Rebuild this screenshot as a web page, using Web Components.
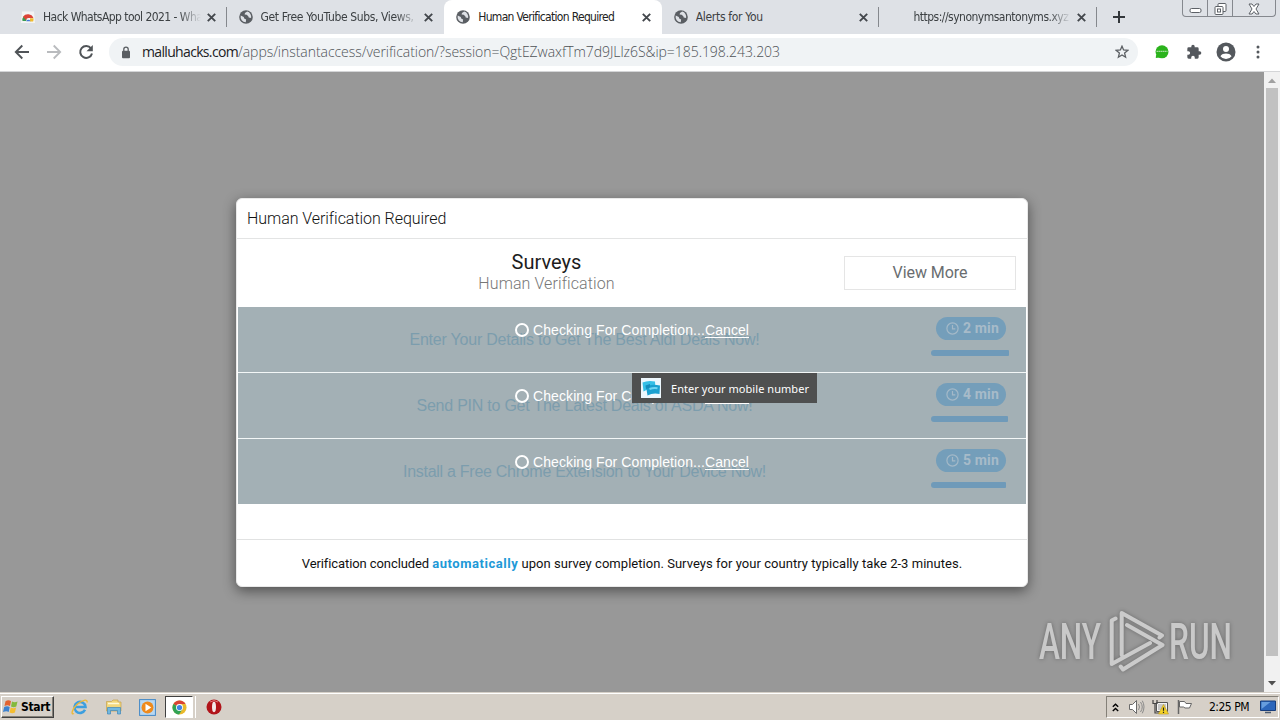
<!DOCTYPE html>
<html lang="en">
<head>
<meta charset="utf-8">
<title>Human Verification Required</title>
<style>
  html, body { margin: 0; height: 100%; overflow: hidden; }
  body { font-family: "Liberation Sans", sans-serif; }
</style>
</head>
<body>
<desktop-screen></desktop-screen>

<script>
const TAHOMA = `"DejaVu Sans Condensed", "Noto Sans", sans-serif`;

const ICONS = {
  globe: `<svg width="14" height="14" viewBox="0 0 14 14"><circle cx="7" cy="7" r="6.8" fill="#5a5e63"/><path d="M1.7 5.6 4.8 7l.4 1.6 1.9.8-.3 2.9A5.5 5.5 0 0 1 1.7 5.6zM8.2 1.6 6 3.1 5.6 4.6l2.1.1 1.6 1.5.4 1.4 2.4.3A5.4 5.4 0 0 0 8.2 1.6z" fill="#dee1e6"/></svg>`,
  store: `<svg width="14" height="14" viewBox="0 0 14 14"><path d="M1 1.5h12L14 13H0z" fill="#f3f3f3"/><path d="M1.5 11a5.5 5.5 0 0 1 1-4.4L5.600 9a2.500 2.500 0 0 0-.3 2z" fill="#3a9b52"/><path d="M2 6.800A6 6 0 0 1 12.400 8H7.500A2.600 2.600 0 0 0 5 10z" fill="#dc4337"/><path d="M9 8.200h3.500a6 6 0 0 1-.4 3.200H9z" fill="#f1bc2e"/><path d="M5.200 11.300a2.300 2.300 0 0 1 4.300 0z" fill="#4177d8"/></svg>`,
  blank: `<svg width="14" height="14"></svg>`,
  close: `<svg width="9" height="9" viewBox="0 0 9 9" stroke="#43474c" stroke-width="1.9"><path d="M.8.8l7.400 7.400M8.200.8.8 8.200"/></svg>`,
  back: `<svg width="16" height="16" viewBox="0 0 16 16" fill="none" stroke="#505458" stroke-width="1.900"><path d="M15 8H2M8.300 1.500 1.800 8l6.500 6.500"/></svg>`,
  forward: `<svg width="16" height="16" viewBox="0 0 16 16" fill="none" stroke="#b9bbbe" stroke-width="1.800"><path d="M1 8h13M7.700 1.500 14.200 8l-6.500 6.500"/></svg>`,
  reload: `<svg width="16" height="16" viewBox="0 0 16 16"><path d="M13 4.300A6 6 0 1 0 14 9.500" fill="none" stroke="#505458" stroke-width="2"/><path d="M14.800 1v6.300H8.500z" fill="#505458"/></svg>`,
  lock: `<svg width="10" height="13" viewBox="0 0 10 13"><rect x="1" y="4.800" width="8" height="7.400" rx="1" fill="#5a5e62"/><path d="M2.800 5V3.300a2.200 2.200 0 0 1 4.400 0V5" fill="none" stroke="#5a5e62" stroke-width="1.300"/></svg>`,
  star: `<svg width="14" height="14" viewBox="0 0 14 14"><path d="M7 1.200 8.600 5l4.200.4-3.200 2.700 1 4.100L7 10l-3.600 2.200 1-4.100L1.200 5.400 5.400 5z" fill="none" stroke="#5a5e62" stroke-width="1.300"/></svg>`,
  green: `<svg width="14" height="14" viewBox="0 0 14 14"><circle cx="7" cy="6.800" r="6.500" fill="#2bb31c"/><path d="M1 9.500.8 13l4-.6z" fill="#2bb31c"/><path d="M1.500 6.300h11" stroke="#a5dc9f" stroke-width="1.300" stroke-dasharray="1.600 .4"/></svg>`,
  puzzle: `<svg width="16" height="16" viewBox="0 0 24 24"><path d="M20.500 11H19V7a2 2 0 0 0-2-2h-4V3.500a2.500 2.500 0 0 0-5 0V5H4a2 2 0 0 0-2 2v3.800h1.500a2.700 2.700 0 0 1 0 5.400H2V20a2 2 0 0 0 2 2h3.800v-1.500a2.700 2.700 0 0 1 5.400 0V22H17a2 2 0 0 0 2-2v-4h1.500a2.500 2.500 0 0 0 0-5z" fill="#54585d"/></svg>`,
  person: `<svg width="20" height="20" viewBox="0 0 20 20"><circle cx="10" cy="10" r="9.500" fill="#54585d"/><circle cx="10" cy="6.900" r="3" fill="#fff"/><path d="M4.400 14.200C5.300 12.200 8 11.500 10 11.500s4.700.7 5.600 2.700A6.800 6.800 0 0 1 10 17a6.800 6.800 0 0 1-5.600-2.800z" fill="#fff"/></svg>`,
  dots: `<svg width="4" height="14" viewBox="0 0 4 14" fill="#54585d"><circle cx="2" cy="2" r="1.500"/><circle cx="2" cy="7" r="1.500"/><circle cx="2" cy="12" r="1.500"/></svg>`,
  clock: `<svg width="13" height="13" viewBox="0 0 13 13" fill="none" stroke="#a4b9c8" stroke-width="1.200"><circle cx="6.500" cy="6.500" r="5.600"/><path d="M6.500 3v3.800H9.300"/></svg>`,
  spinner: `<svg width="14" height="14" viewBox="0 0 14 14"><circle cx="7" cy="7" r="6" fill="none" stroke="#fff" stroke-width="2"/></svg>`,
  flag: `<svg width="18" height="16" viewBox="0 0 18 16"><path d="M3.500 2.200C5.500 1 7 1 9 2L8 7C6 6 4.600 6.200 2.500 7z" fill="#e2622f"/><path d="M10 2.500c2 1 3.600.8 5.500 0l-1.200 5c-2 .9-3.500.8-5.300-.1z" fill="#83b93c"/><path d="M2.200 8C4 7.200 5.800 7 7.700 8l-1 5C5 12 3.300 12.200 1 13z" fill="#3c81cf"/><path d="M8.700 8.500c2 1 3.500.9 5.400.1l-1.200 5c-2 .9-3.500.8-5.300-.1z" fill="#f4bd31"/></svg>`,
  ie: `<svg width="18" height="18" viewBox="0 0 18 18"><path d="M14 11.800A5.500 5.500 0 1 1 14.500 9H4.500" fill="none" stroke="#3d9fdf" stroke-width="2.600"/><path d="M3 15.500C-.5 17.500 1 11 6 6.500S17 .5 16 4.500" fill="none" stroke="#edb938" stroke-width="1.400"/></svg>`,
  folder: `<svg width="18" height="18" viewBox="0 0 18 18"><path d="M1.500 3.500h5L8 2h5v2h3v9H1.500z" fill="#f2d77c" stroke="#c5a24c" stroke-width=".7"/><path d="M3 5.500h11" stroke="#fff9d6" stroke-width="1.500"/><path d="M2.500 16V9.500h13V16h-3v-3.500h-7V16z" fill="#72b8df" stroke="#3d86ba" stroke-width=".7"/></svg>`,
  media: `<svg width="17" height="17" viewBox="0 0 17 17"><rect x=".6" y=".6" width="15.800" height="15.800" fill="#b8d8f2" stroke="#4388c6"/><circle cx="8.500" cy="8.500" r="6" fill="#ef8a1c"/><path d="M6.500 4.800v7.400l5.800-3.700z" fill="#fff"/></svg>`,
  chrome: `<svg width="15" height="15" viewBox="0 0 16 16"><circle cx="8" cy="8" r="7.500" fill="#e9b92c"/><path d="M8 8 1.500 4.300A7.500 7.500 0 0 1 14.500 4.300H8z" fill="#da4335"/><path d="M8 8 1.500 4.250A7.500 7.500 0 0 0 7.500 15.500L11 10z" fill="#31a355"/><circle cx="8" cy="8" r="3.700" fill="#fff"/><circle cx="8" cy="8" r="2.800" fill="#4285e4"/></svg>`,
  opera: `<svg width="16" height="16" viewBox="0 0 16 16"><circle cx="8" cy="8" r="7.500" fill="#b1141a"/><path d="M4 3a7 7 0 0 1 8 0" fill="none" stroke="#e4777a"/><ellipse cx="8" cy="8" rx="2" ry="5.200" fill="#f3e9e9"/></svg>`,
  chevrons: `<svg width="7" height="9" viewBox="0 0 7 9" fill="none" stroke="#000" stroke-width="1.400"><path d="M.8 3.800 3.500 1.200l2.700 2.600M.8 8 3.500 5.400 6.200 8"/></svg>`,
  sound: `<svg width="17" height="16" viewBox="0 0 17 16" fill="none" stroke="#6a6a6a"><path d="M1.500 5.500h3l4-4v13l-4-4h-3z" fill="#fff"/><path d="M10.500 5q2 3 0 6M12.500 3q3.500 5 0 10M14.300 1.700q3.400 6 0 12.600" stroke="#8a8a8a"/></svg>`,
  network: `<svg width="17" height="16" viewBox="0 0 17 16"><path d="M4.500 3.500h11v9h-11z" fill="#f4f4f4" stroke="#555"/><path d="M6 5h8v6H6z" fill="#c8c8c8"/><path d="M1 1v3.500h4V1M3 4.500V14h4" fill="none" stroke="#444" stroke-width="1.200"/><path d="M11.500 5.500 16.500 15h-10z" fill="#f5d327" stroke="#bc981b" stroke-width=".6"/><path d="M11.500 8.500v3.300M11.500 12.800V14" stroke="#222" stroke-width="1.200"/></svg>`,
  action: `<svg width="17" height="16" viewBox="0 0 17 16" fill="#fff" stroke="#666"><path d="M2.500 1v14" stroke-width="1.500"/><path d="M3.500 2.500h5l1.500 2h5.500L13.500 9H9L7.500 8h-4z"/></svg>`,
  monitor: `<svg width="16" height="14" viewBox="0 0 16 14"><path d="M.5 1h15v9.500H.5z" fill="#2c66bb" stroke="#173d7b"/><path d="M1.500 2h9l-9 7z" fill="#679dde"/><path d="M5 12.500h6" stroke="#4d5c70" stroke-width="1.500"/></svg>`,
  cards: `<svg width="20" height="20" viewBox="0 0 20 20"><path d="M0 0h20v20H0z" fill="#edf7fd"/><path d="M1.500 4.500Q7 2 14 3.500l.5 8Q8 10 2.500 13.500z" fill="#35bfe6"/><path d="M5 8.500Q11 5.500 19 7.500l-.5 8.500Q12 14.500 6.500 17.500z" fill="#1aa0d0"/><path d="M4.500 7.500 9 6v3.500L5 11z" fill="#128cbc"/><path d="M8.500 11q4-1.500 8-.8" fill="none" stroke="#6fd5f2" stroke-width="2"/></svg>`,
};

// Small base class: renders its shadow root from render() when it is created
class UiElement extends HTMLElement {
  constructor() {
    super();
    this.attachShadow({ mode: "open" });
    this.shadowRoot.innerHTML = this.render();
  }

  attr(name, fallback = "") {
    return this.getAttribute(name) ?? fallback;
  }
}

class UiIcon extends UiElement {
  render() {
    return `
      <style>
        :host { display: flex; flex: none; align-items: center; justify-content: center; }
        svg { display: block; }
      </style>
      ${ICONS[this.attr("name")]}`;
  }
}

// One line of text tracked to an exact width
class FitText extends UiElement {
  connectedCallback() {
    const target = Number(this.getAttribute("width"));
    const span = this.shadowRoot.querySelector("span");
    const natural = span.getBoundingClientRect().width;
    this.style.letterSpacing = `${(target - natural) / this.textContent.length}px`;
  }

  render() {
    return `
      <style>
        :host { display: inline-block; flex: none; }
        span { white-space: pre; }
      </style>
      <span><slot></slot></span>`;
  }
}

class BrowserTab extends UiElement {
  render() {
    return `
      <style>
        :host {
          display: flex;
          align-items: center;
          box-sizing: border-box;
          width: 217.6px;
          height: 34px;
          padding: 0 11px 0 12px;
          font: 12px ${TAHOMA};
          color: #3c4043;
          position: relative;
        }
        :host([active]) { background: #fff; border-radius: 8px 8px 0 0; color: #222; }
        .label { flex: 1; overflow: hidden; margin: 0 6px 0 8px; line-height: 18px; white-space: nowrap; }
        :host([fade]) .label { -webkit-mask-image: linear-gradient(90deg, #000 86%, transparent); }
        .divider { position: absolute; right: 0; top: 7px; width: 1px; height: 20px; background: #85888d; }
      </style>
      <ui-icon name="${this.attr("icon", "globe")}"></ui-icon>
      <div class="label"><slot></slot></div>
      <ui-icon name="close"></ui-icon>
      ${this.hasAttribute("divider") ? `<div class="divider"></div>` : ""}`;
  }
}

class WindowButtons extends UiElement {
  render() {
    return `
      <style>
        :host {
          display: flex;
          box-sizing: border-box;
          width: 94px;
          height: 17px;
          margin: 0 4px 0 auto;
          border: 1px solid #85888e;
          border-top: 0;
          border-radius: 0 0 4px 4px;
        }
        div { display: flex; align-items: center; justify-content: center; width: 24px; border-right: 1px solid #85888e; }
        div:last-child { flex: 1; border: 0; }
        svg { fill: #fff; stroke: #5d6167; }
      </style>
      <div><svg width="13" height="16"><rect x="1" y="8.500" width="11" height="4" rx="1.500"/></svg></div>
      <div><svg width="13" height="15"><rect x="4" y="2.500" width="8" height="8" rx="1"/><rect x="1" y="5.500" width="8" height="8" rx="1"/><rect x="3.500" y="8" width="3" height="3"/></svg></div>
      <div><svg width="12" height="15"><path d="M1 3h3l2 2.500L8 3h3L8 8l3 5H8L6 10.500 4 13H1l3-5z"/></svg></div>`;
  }
}

class TabStrip extends UiElement {
  render() {
    return `
      <style>
        :host { display: flex; height: 34px; padding-left: 9px; background: #dee1e6; }
        .add { padding: 11px 0 0 16px; }
        .add svg { display: block; }
      </style>
      <browser-tab icon="store" divider fade><fit-text width="163">Hack WhatsApp tool 2021 - What</fit-text></browser-tab>
      <browser-tab fade><fit-text width="156">Get Free YouTube Subs, Views, </fit-text></browser-tab>
      <browser-tab active><fit-text width="136">Human Verification Required</fit-text></browser-tab>
      <browser-tab divider><fit-text width="67">Alerts for You</fit-text></browser-tab>
      <browser-tab icon="blank" divider fade><fit-text width="155">https://synonymsantonyms.xyz</fit-text></browser-tab>
      <div class="add"><svg width="12" height="12" stroke="#33373b" stroke-width="2"><path d="M6 0v12M0 6h12"/></svg></div>
      <window-buttons></window-buttons>`;
  }
}

class AddressBar extends UiElement {
  render() {
    return `
      <style>
        :host {
          display: flex;
          align-items: center;
          box-sizing: border-box;
          height: 38px;
          padding: 0 6px 1px 14px;
          background: #fff;
          border-bottom: 1px solid #d4d5d7;
        }
        .nav { display: flex; gap: 16px; width: 95px; }
        .box {
          display: flex;
          align-items: center;
          box-sizing: border-box;
          width: 1029px;
          height: 28px;
          padding: 0 9px 0 12px;
          border-radius: 14px;
          background: #f0f3f5;
          font: 300 14px "Open Sans", sans-serif;
          color: #4e5256;
        }
        fit-text { padding-bottom: 2px; }
        .host { font-weight: 400; color: #202124; margin-left: 11px; }
        .box ui-icon:last-child { margin-left: auto; }
        .actions { display: flex; margin-left: 8px; }
        .actions ui-icon { width: 32px; }
      </style>
      <div class="nav">
        <ui-icon name="back"></ui-icon>
        <ui-icon name="forward"></ui-icon>
        <ui-icon name="reload"></ui-icon>
      </div>
      <div class="box">
        <ui-icon name="lock"></ui-icon>
        <fit-text class="host" width="96">malluhacks.com</fit-text>
        <fit-text width="542">/apps/instantaccess/verification/?session=QgtEZwaxfTm7d9JLlz6S&amp;ip=185.198.243.203</fit-text>
        <ui-icon name="star"></ui-icon>
      </div>
      <div class="actions">
        <ui-icon name="green"></ui-icon>
        <ui-icon name="puzzle"></ui-icon>
        <ui-icon name="person"></ui-icon>
        <ui-icon name="dots"></ui-icon>
      </div>`;
  }
}

class SurveyRow extends UiElement {
  render() {
    return `
      <style>
        :host {
          display: flex;
          justify-content: space-between;
          position: relative;
          height: 65px;
          border-bottom: 1px solid #f3f7f7;
          background: #a3b0b5;
          font-family: Roboto, sans-serif;
        }
        :host(:last-of-type) { border-bottom: 0; }
        .title { width: 693px; padding-top: 23px; line-height: 20px; text-align: center; font: 16px/20px "Liberation Sans", sans-serif; color: #7c9dad; }
        .side { width: 95px; padding-top: 10px; }
        .pill {
          display: flex;
          align-items: center;
          gap: 4px;
          box-sizing: border-box;
          width: 70px;
          height: 23px;
          margin-left: 5px;
          padding: 0 0 1px 10px;
          border-radius: 12px;
          background: #749eba;
          color: #a7bbc9;
          font-size: 14px;
          font-weight: 700;
        }
        .bar { height: 6px; margin-top: 10px; border-radius: 3px 1px 1px 3px; background: #6f9ab9; }
        .checking {
          display: flex;
          align-items: center;
          justify-content: center;
          position: absolute;
          inset: 13px 0 auto;
          height: 20px;
          color: #fff;
          font: 14px "Liberation Sans", sans-serif;
        }
        .checking ui-icon { margin-right: 4px; }
        .cancel { text-decoration: underline 1px; text-underline-offset: 2px; text-decoration-skip-ink: none; }
      </style>
      <div class="title"><slot></slot></div>
      <div class="side">
        <div class="pill"><ui-icon name="clock"></ui-icon><fit-text width="36">${this.attr("time")} min</fit-text></div>
        <div class="bar" style="width: ${this.attr("bar")}px"></div>
      </div>
      <div class="checking">
        <ui-icon name="spinner"></ui-icon>
        <fit-text width="172">Checking For Completion...</fit-text>
        <fit-text class="cancel" width="44">Cancel</fit-text>
      </div>`;
  }
}

class SurveyDialog extends UiElement {
  render() {
    return `
      <style>
        :host {
          display: flex;
          flex-direction: column;
          box-sizing: border-box;
          width: 792px;
          height: 389px;
          border: 1px solid #e9e9e9;
          border-radius: 6px;
          background: #fff;
          box-shadow: 0 4px 13px rgba(0, 0, 0, .48);
          font-family: Roboto, sans-serif;
        }
        header { height: 39px; padding-left: 10px; border-bottom: 1px solid #e3e4e4; font-size: 16px; line-height: 39px; color: #111; font-weight: 300; }
        .intro { display: flex; align-items: center; height: 68px; }
        .names { width: 599px; padding: 0 0 1px 10px; text-align: center; line-height: 22px; }
        .big { font-size: 20px; color: #1d1d1d; }
        .small { font-size: 16px; color: #777; font-weight: 300; }
        .more {
          box-sizing: border-box;
          width: 172px;
          height: 34px;
          margin-left: -2px;
          border: 1px solid #e5e5e5;
          line-height: 32px;
          text-align: center;
          color: #696d70;
        }
        .rows { padding: 0 1px; }
        footer { margin-top: auto; height: 46px; border-top: 1px solid #e1e2e2; text-align: center; font-size: 13px; line-height: 48px; color: #111; }
        b { color: #2199d7; }
      </style>
      <header><fit-text width="199">Human Verification Required</fit-text></header>
      <div class="intro">
        <div class="names">
          <div class="big"><fit-text width="70">Surveys</fit-text></div>
          <div class="small"><fit-text width="136">Human Verification</fit-text></div>
        </div>
        <div class="more"><fit-text width="75">View More</fit-text></div>
      </div>
      <div class="rows"><slot></slot></div>
      <footer><fit-text width="130">Verification concluded </fit-text><b><fit-text width="86">automatically</fit-text></b><fit-text width="444"> upon survey completion. Surveys for your country typically take 2-3 minutes.</fit-text></footer>`;
  }
}

class ToastTip extends UiElement {
  render() {
    return `
      <style>
        :host {
          display: flex;
          align-items: center;
          box-sizing: border-box;
          width: 185px;
          height: 30px;
          padding-left: 9px;
          gap: 10px;
          background: #4f5050;
          color: #fff;
          font: 11px "Noto Sans", sans-serif;
        }
      </style>
      <ui-icon name="cards"></ui-icon>
      <slot></slot>`;
  }
}

class PageScrollbar extends UiElement {
  render() {
    return `
      <style>
        :host { display: flex; flex-direction: column; align-items: center; width: 16px; background: #f1f1f1; }
        .thumb { width: 12px; height: 568px; background: #c1c1c1; }
        svg { display: block; height: 16px; width: 16px; }
        .down { margin-top: auto; }
      </style>
      <svg><path d="M4 11h8L8 6.500z" fill="#a0a0a0"/></svg>
      <div class="thumb"></div>
      <svg class="down"><path d="M4 5h8l-4 4.500z" fill="#505050"/></svg>`;
  }
}

class AnyrunMark extends UiElement {
  render() {
    return `
      <style>
        :host { display: block; filter: drop-shadow(0 0 2px rgba(0, 0, 0, .3)); }
        svg { display: block; overflow: visible; }
        text { font: 500 50px Roboto, sans-serif; fill: #c9c9c9; }
        path { fill: none; stroke: #cbcbcb; stroke-width: 4; stroke-linejoin: round; stroke-linecap: round; }
      </style>
      <svg width="202" height="66" viewBox="0 0 202 66">
        <text x="2" y="50" textLength="62" lengthAdjust="spacingAndGlyphs">ANY</text>
        <text x="132" y="50" textLength="63" lengthAdjust="spacingAndGlyphs">RUN</text>
        <path d="M78.500 9.500 74.700 11.500V55L113 34M84.700 46V4L125 26.500 122.500 28.500M90 16 125.500 36 86 60.500 83.700 57.500"/>
      </svg>`;
  }
}

class WebPage extends UiElement {
  render() {
    return `
      <style>
        :host { display: flex; height: 620px; background: #989898; position: relative; }
        main { flex: 1; padding: 126px 0 0 236px; }
        toast-tip { position: absolute; left: 632px; top: 301px; }
        anyrun-mark { position: absolute; left: 1037px; top: 537px; }
      </style>
      <main>
        <survey-dialog>
          <survey-row time="2" bar="78"><fit-text width="350">Enter Your Details to Get The Best Aldi Deals Now!</fit-text></survey-row>
          <survey-row time="4" bar="77"><fit-text width="336">Send PIN to Get The Latest Deals of ASDA Now!</fit-text></survey-row>
          <survey-row time="5" bar="75"><fit-text width="363">Install a Free Chrome Extension to Your Device Now!</fit-text></survey-row>
        </survey-dialog>
      </main>
      <page-scrollbar></page-scrollbar>
      <toast-tip><fit-text width="138">Enter your mobile number</fit-text></toast-tip>
      <anyrun-mark></anyrun-mark>`;
  }
}

class TaskBar extends UiElement {
  render() {
    return `
      <style>
        :host {
          display: flex;
          align-items: center;
          box-sizing: border-box;
          height: 28px;
          padding: 1px 1px 0;
          background: #d6d0c8;
          border-top: 1px solid #d6d0c8;
          box-shadow: inset 0 1px #fff;
          font-family: ${TAHOMA};
          color: #000;
        }
        .start {
          display: flex;
          align-items: center;
          box-sizing: border-box;
          width: 53px;
          height: 22px;
          gap: 1px;
          border: 1px solid;
          border-color: #fff #404040 #404040 #fff;
          box-shadow: inset -1px -1px #848078;
          font-size: 12px;
          font-weight: 700;
        }
        .launch { display: flex; align-items: center; margin-left: 17px; gap: 16px; }
        .open {
          display: flex;
          align-items: center;
          justify-content: center;
          box-sizing: border-box;
          width: 28px;
          height: 22px;
          margin: 0 -3px 0 -7px;
          border: 1px solid;
          border-color: #404040 #fff #fff #404040;
          background: #fff;
          box-shadow: 2px 0 #d6d0c8, 3px 0 #fff;
        }
        .tray {
          display: flex;
          align-items: center;
          box-sizing: border-box;
          width: 173px;
          height: 22px;
          margin-left: auto;
          padding-left: 5px;
          border: 1px solid;
          border-color: #848078 #fff #fff #848078;
          gap: 7px;
          font-size: 12px;
        }
        .tray ui-icon:nth-of-type(2) { margin-left: 2px; }
        .tray fit-text { margin: 0 4px 0 9px; }
      </style>
      <div class="start"><ui-icon name="flag"></ui-icon><fit-text width="29">Start</fit-text></div>
      <div class="launch">
        <ui-icon name="ie"></ui-icon>
        <ui-icon name="folder"></ui-icon>
        <ui-icon name="media"></ui-icon>
        <div class="open"><ui-icon name="chrome"></ui-icon></div>
        <ui-icon name="opera"></ui-icon>
      </div>
      <div class="tray">
        <ui-icon name="chevrons"></ui-icon>
        <ui-icon name="sound"></ui-icon>
        <ui-icon name="network"></ui-icon>
        <ui-icon name="action"></ui-icon>
        <fit-text width="40">2:25 PM</fit-text>
        <ui-icon name="monitor"></ui-icon>
      </div>`;
  }
}

class DesktopScreen extends UiElement {
  render() {
    return `
      <style>
        :host { display: flex; flex-direction: column; width: 1280px; height: 720px; overflow: hidden; }
      </style>
      <tab-strip></tab-strip>
      <address-bar></address-bar>
      <web-page></web-page>
      <task-bar></task-bar>`;
  }
}

customElements.define("desktop-screen", DesktopScreen);
customElements.define("tab-strip", TabStrip);
customElements.define("browser-tab", BrowserTab);
customElements.define("window-buttons", WindowButtons);
customElements.define("address-bar", AddressBar);
customElements.define("web-page", WebPage);
customElements.define("survey-dialog", SurveyDialog);
customElements.define("survey-row", SurveyRow);
customElements.define("toast-tip", ToastTip);
customElements.define("page-scrollbar", PageScrollbar);
customElements.define("anyrun-mark", AnyrunMark);
customElements.define("task-bar", TaskBar);
customElements.define("ui-icon", UiIcon);
// Measures laid-out text, so it comes after everything that styles it
customElements.define("fit-text", FitText);
</script>
</body>
</html>
